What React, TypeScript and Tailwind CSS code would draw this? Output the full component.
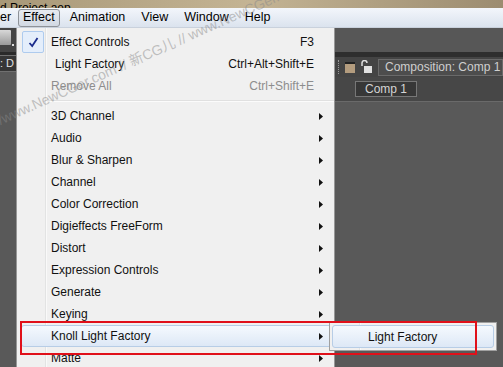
import React from 'react';

const font = { fontFamily: '"Liberation Sans", Arial, sans-serif' };

type Item = { label: string; shortcut?: string; sub?: boolean; disabled?: boolean; checked?: boolean; indent?: boolean; hot?: boolean };

const top: Item[] = [
  { label: 'Effect Controls', shortcut: 'F3', checked: true },
  { label: 'Light Factory', shortcut: 'Ctrl+Alt+Shift+E', indent: true },
  { label: 'Remove All', shortcut: 'Ctrl+Shift+E', disabled: true },
];

const cats: Item[] = [
  { label: '3D Channel', sub: true },
  { label: 'Audio', sub: true },
  { label: 'Blur & Sharpen', sub: true },
  { label: 'Channel', sub: true },
  { label: 'Color Correction', sub: true },
  { label: 'Digieffects FreeForm', sub: true },
  { label: 'Distort', sub: true },
  { label: 'Expression Controls', sub: true },
  { label: 'Generate', sub: true },
  { label: 'Keying', sub: true },
  { label: 'Knoll Light Factory', sub: true, hot: true },
  { label: 'Matte', sub: true },
];

function Arrow() {
  return (
    <svg width="4" height="7" viewBox="0 0 4 7" className="shrink-0">
      <path d="M0 0 L4 3.5 L0 7 Z" fill="#111" />
    </svg>
  );
}

function Row({ it }: { it: Item }) {
  return (
    <div className="relative h-[22px] flex items-center">
      {it.hot && (
        <div className="absolute left-[4px] right-[1px] top-0 bottom-0 rounded-[3px] border border-[#b7cde6] bg-gradient-to-b from-[#f5f9fe] to-[#dde8f6]" />
      )}
      <div className="relative w-[30px] h-[22px] shrink-0 flex items-center justify-center">
        {it.checked && (
          <div className="w-[22px] h-[22px] ml-[2px] rounded-[2px] border border-[#aecbee] bg-[#e4eefb] flex items-center justify-center">
            <svg width="11" height="11" viewBox="0 0 11 11">
              <path d="M1.5 6 L4.2 9 L9.5 1" stroke="#1a2c8c" strokeWidth="1.8" fill="none" />
            </svg>
          </div>
        )}
      </div>
      <div className={`relative flex-1 flex items-center pl-[4px] pr-[11px] text-[12px] ${it.disabled ? 'text-[#8d8d8d]' : 'text-[#111]'}`}>
        <span className={it.indent ? 'pl-[4px]' : ''}>{it.label}</span>
        <span className="ml-auto mr-[9px]">{it.shortcut}</span>
        {it.sub && <Arrow />}
      </div>
    </div>
  );
}

export default function App() {
  return (
    <div className="relative w-[503px] h-[367px] overflow-hidden bg-[#595959] flex flex-col" style={font}>
      {/* title bar */}
      <div className="h-[8px] shrink-0 overflow-hidden bg-gradient-to-r from-[#a89878] via-[#c4b494] to-[#9c8c70] relative">
        <span className="absolute left-0 bottom-[-6px] text-[12px] text-black leading-none">d Project.aep</span>
      </div>
      {/* menu bar */}
      <div className="h-[20px] shrink-0 flex items-center text-[12.5px] text-black bg-gradient-to-b from-[#f3f6fb] to-[#dbe3ee] border-b border-[#c9d1dc]">
        <span className="w-[18px]">er</span>
        <span className="h-[18px] px-[4px] flex items-center rounded-[3px] border border-[#8e9298] bg-gradient-to-b from-[#e6eaf0] to-[#d2d9e3]">Effect</span>
        <span className="ml-[10px]">Animation</span>
        <span className="ml-[16px]">View</span>
        <span className="ml-[16px]">Window</span>
        <span className="ml-[16px]">Help</span>
      </div>
      {/* body */}
      <div className="flex-1 flex min-h-0">
        {/* left strip */}
        <div className="w-[16px] shrink-0 flex flex-col">
          <div className="h-[24px] bg-[#444] flex items-start pt-[2px] relative">
            <div className="w-[11px] h-[15px] bg-gradient-to-b from-[#d8d8d8] to-[#9a9a9a] rounded-r-[1px]" />
            <div className="absolute left-[12px] top-[16px] w-[2px] h-[2px] bg-[#ddd]" />
          </div>
          <div className="h-[3px] bg-[#2a2a2a]" />
          <div className="h-[17px] bg-[#363636] border-y border-[#707070] text-[11px] text-[#e0e0e0] flex items-center leading-none">: D</div>
          <div className="flex-1 bg-[#595959]" />
        </div>
        {/* dropdown */}
        <div className="w-[319px] shrink-0 bg-[#f0f0f0] border-l border-r border-[#979797] pt-[3px] relative">
          <div className="absolute left-[28px] top-0 bottom-0 w-[2px] border-l border-[#e2e3e3] bg-white/60" />
          {top.map((it) => <Row key={it.label} it={it} />)}
          <div className="h-[8px] flex items-center pl-[31px] relative">
            <div className="w-full h-[2px] border-t border-[#e0e0e0] bg-white/70" />
          </div>
          {cats.map((it) => <Row key={it.label} it={it} />)}
        </div>
        {/* right area */}
        <div className="flex-1 flex flex-col min-w-0">
          <div className="h-[24px] bg-[#575757]" />
          <div className="h-[5px] bg-[#2e2e2e]" />
          <div className="h-[20px] bg-[#444] flex items-center pl-[3px] gap-[5px]">
            <div className="w-[2px] h-[14px] border-l border-dotted border-[#999]" />
            <div className="w-[10px] h-[11px] bg-[#b39c7e] border-t-2 border-[#222]" />
            <svg width="13" height="14" viewBox="0 0 13 14">
              <path d="M2 6 V3 a2.5 2.5 0 0 1 5 0" stroke="#ddd" strokeWidth="1.5" fill="none" />
              <rect x="4" y="6" width="8" height="7" fill="#e0e0e0" />
            </svg>
            <div className="flex-1 h-[17px] bg-[#4d4d4d] border border-[#6a6a6a] text-[12px] text-[#cfcfcf] flex items-center pl-[6px] whitespace-nowrap overflow-hidden">Composition: Comp 1</div>
          </div>
          <div className="h-[25px] bg-[#474747] flex items-center pl-[20px] border-b border-[#6a6a6a]">
            <div className="h-[16px] px-[9px] bg-[#373737] border border-[#777] text-[12px] text-[#d4d4d4] flex items-center">Comp 1</div>
          </div>
          <div className="flex-1 bg-[#595959]" />
        </div>
      </div>

      {/* submenu */}
      <div className="absolute left-[329px] top-[322px] w-[168px] h-[29px] bg-[#f0f0f0] border border-[#a0a0a0] p-[2px]">
        <div className="absolute left-[29px] top-0 bottom-0 w-[2px] border-l border-[#e2e3e3] bg-white/60" />
        <div className="relative h-[23px] rounded-[3px] border border-[#b7cde6] bg-gradient-to-b from-[#f5f9fe] to-[#dde8f6] flex items-center pl-[35px] text-[12px] text-[#111]">Light Factory</div>
      </div>

      {/* red annotation */}
      <div className="absolute left-[20px] top-[321px] w-[457px] h-[34px] border-2 border-[#e0101a]" />

      {/* watermark */}
      <div
        className="absolute left-[-5px] top-[112px] text-[14px] text-[#8a8a8a]/50 whitespace-nowrap pointer-events-none -rotate-[24deg] origin-left"
        style={{ fontFamily: '"Liberation Sans", "Noto Sans CJK SC", sans-serif' }}
      >
        {'//www.NewCGer.com // 新CG儿 // www.NewCGer.com'}
      </div>
    </div>
  );
}
